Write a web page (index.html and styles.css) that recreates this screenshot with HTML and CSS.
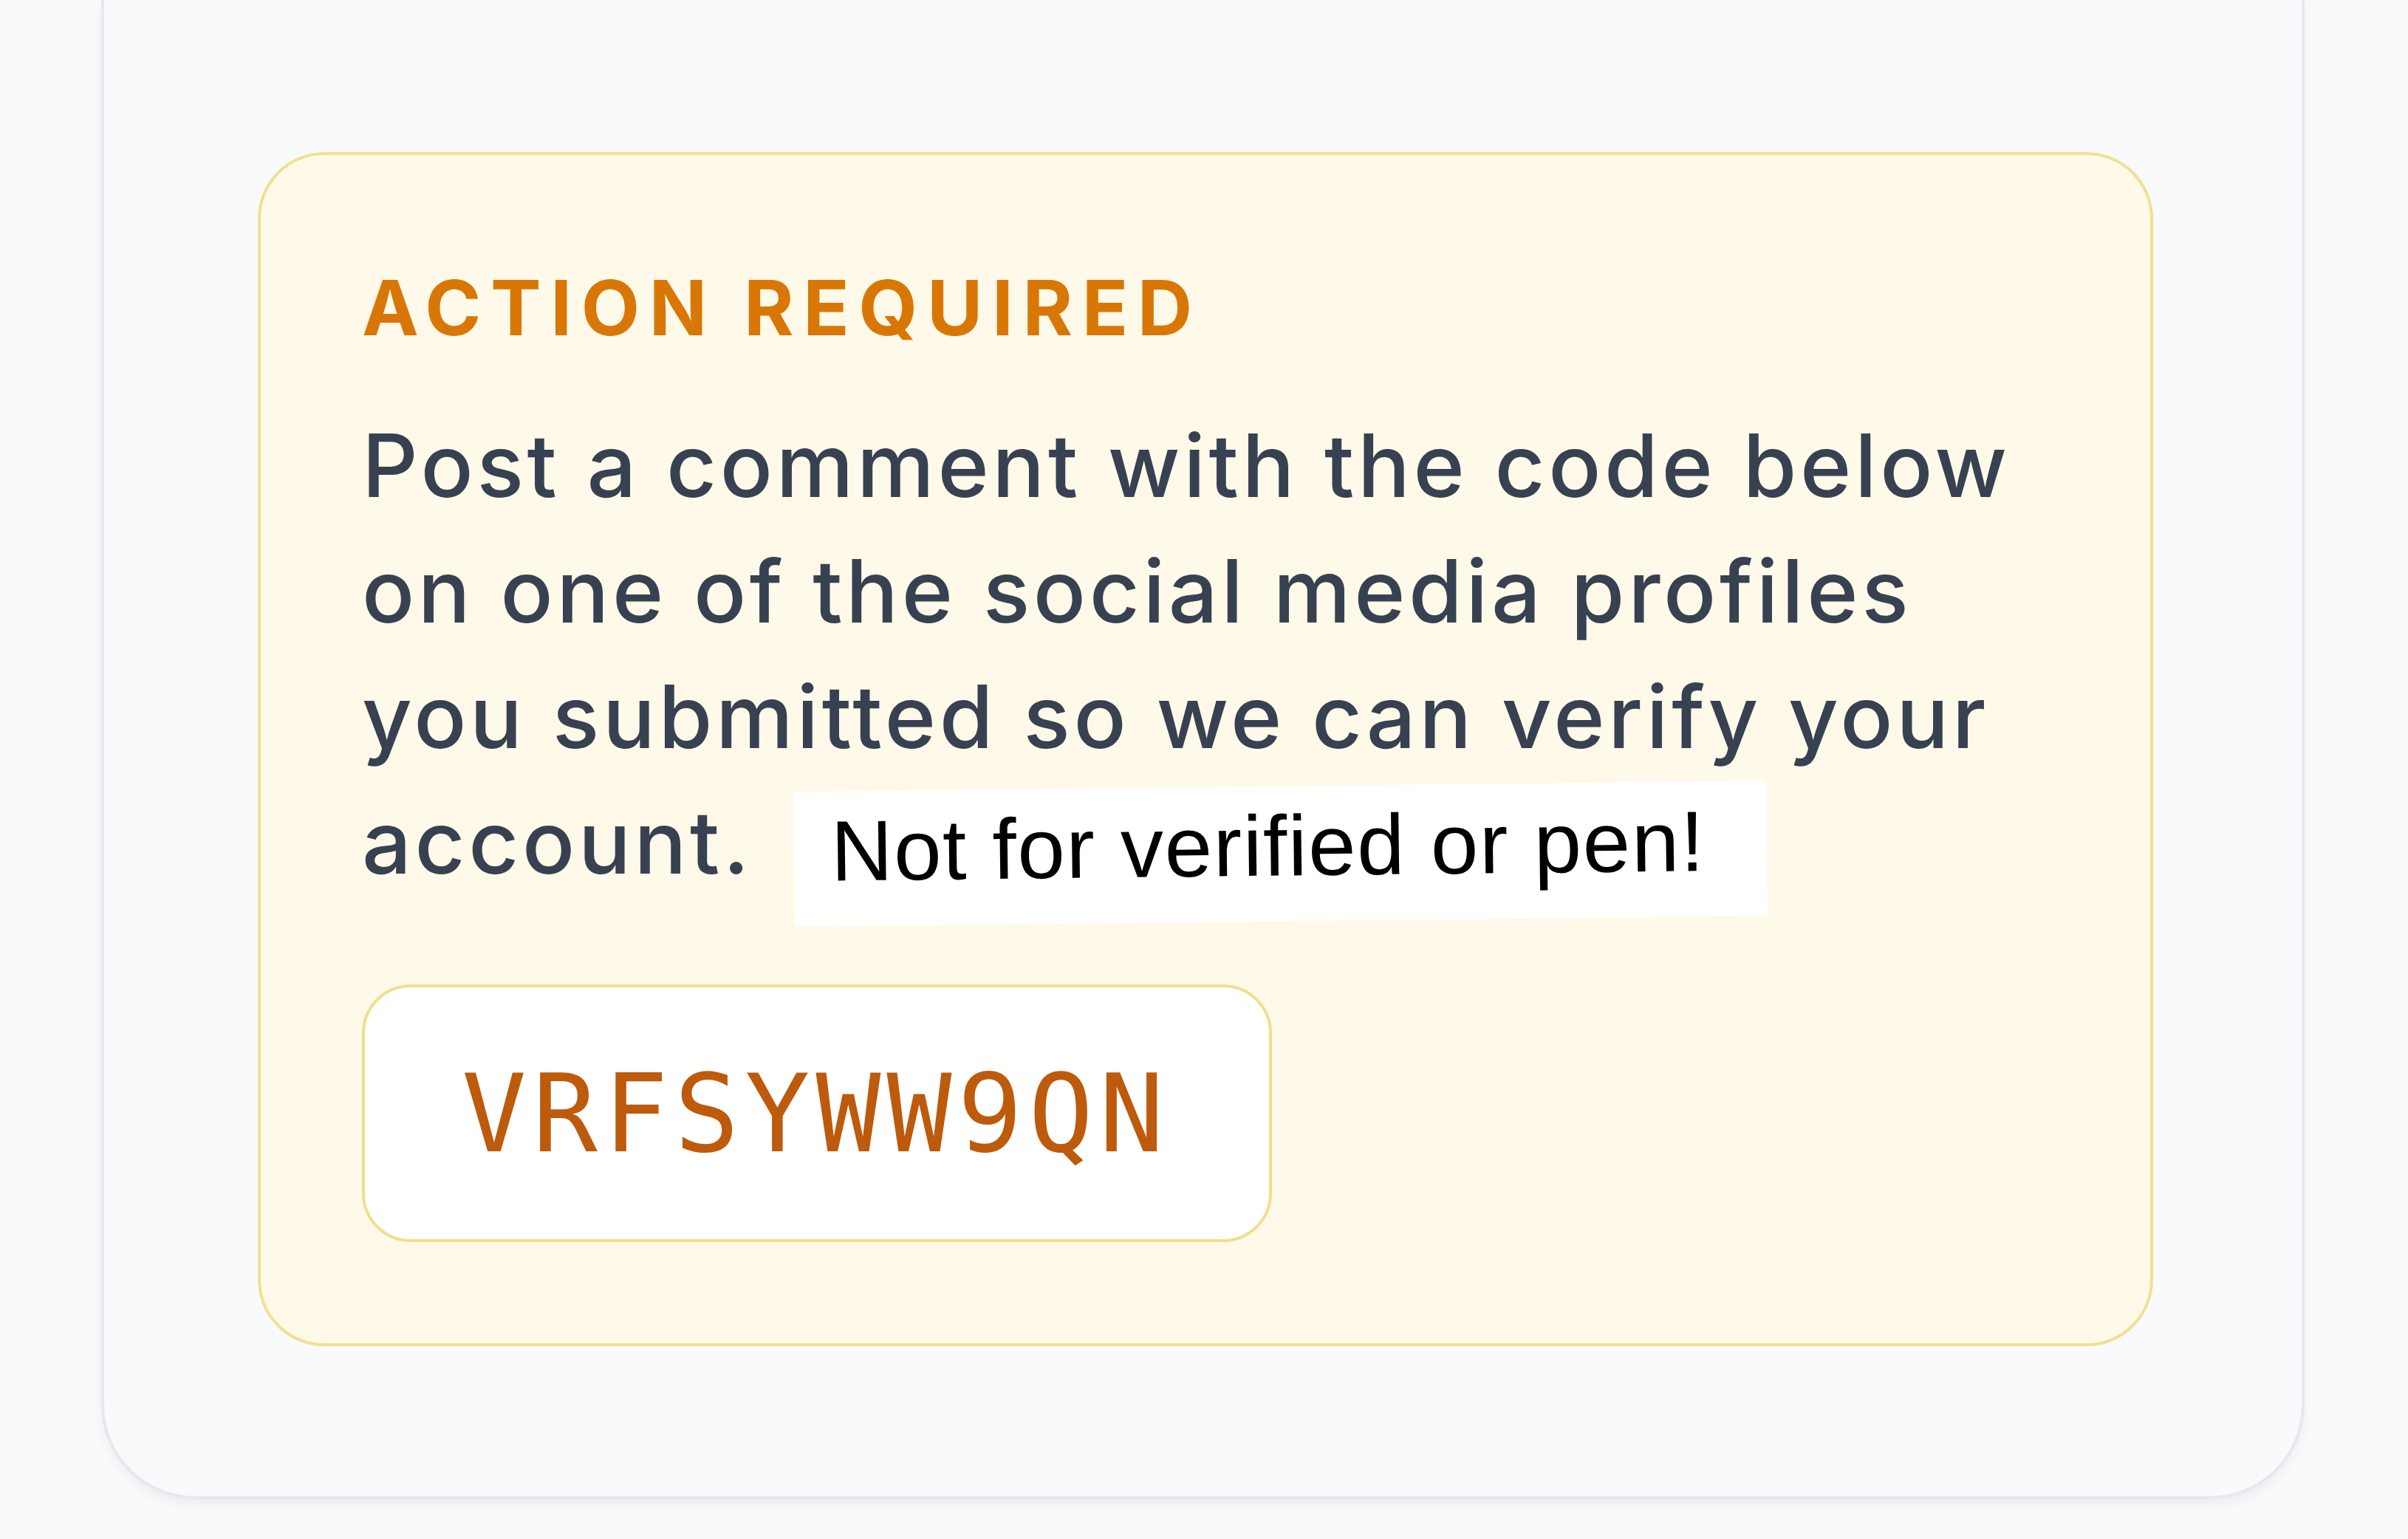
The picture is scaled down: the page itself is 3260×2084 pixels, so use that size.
FILE: index.html
```html
<!DOCTYPE html>
<html lang="en">
<head>
<meta charset="utf-8">
<title>Action required</title>
<link rel="stylesheet" href="styles.css">
</head>
<body>
  <div class="page">
    <section class="card">
      <div class="notice">
        <h2 class="notice-title">ACTION REQUIRED</h2>
        <p class="notice-text">Post a comment with the code below on one of the social media profiles you submitted so we can verify your account. <span class="sticker">Not for verified or pen!</span></p>
        <div class="code">VRFSYWW9QN</div>
      </div>
    </section>
  </div>
</body>
</html>
```

FILE: styles.css
```css
html, body {
  margin: 0;
  padding: 0;
  background: #f9fafb;
}

.page {
  width: 3260px;
  height: 2084px;
  box-sizing: border-box;
  padding: 0 140px 0 137px;
  overflow: hidden;
}

.card {
  box-sizing: border-box;
  background: #f9fafb;
  border: 4px solid #e6e8eb;
  border-top: 0;
  border-radius: 0 0 128px 128px;
  padding: 206px 201px 203px 208px;
  box-shadow: 0 8px 14px rgba(17, 24, 39, 0.05);
}

.notice {
  background: #fef9e8;
  border: 4px solid #f1e091;
  border-radius: 90px;
  padding: 142px 137px 137px 137px;
}

.notice-title {
  margin: 0 0 64px;
  font-family: Inter, "Noto Sans", sans-serif;
  font-size: 103px;
  line-height: 129px;
  font-weight: 700;
  letter-spacing: 12.6px;
  color: #d97706;
}

.notice-text {
  margin: 0;
  font-family: Inter, "Noto Sans", sans-serif;
  font-size: 118px;
  line-height: 170px;
  font-weight: 500;
  letter-spacing: 4.6px;
  color: #374151;
}

.sticker {
  display: inline-block;
  margin: 0 0 -40px 22px;
  padding: 0 83px 20px 50px;
  line-height: 163px;
  vertical-align: -10px;
  background: #ffffff;
  font-family: "Liberation Sans", Arial, sans-serif;
  font-size: 116px;
  font-weight: 400;
  letter-spacing: 1.5px;
  color: #000000;
  transform: rotate(-0.65deg);
  transform-origin: left bottom;
}

.code {
  display: flex;
  align-items: center;
  box-sizing: border-box;
  width: 1232px;
  height: 349px;
  margin-top: 108px;
  padding: 0 0 0 131px;
  background: #ffffff;
  border: 4px solid #f1df8c;
  border-radius: 66px;
  font-family: "DejaVu Sans Mono", "Liberation Mono", monospace;
  font-size: 146px;
  line-height: 146px;
  letter-spacing: 8px;
  color: #bd5a0b;
}
```
